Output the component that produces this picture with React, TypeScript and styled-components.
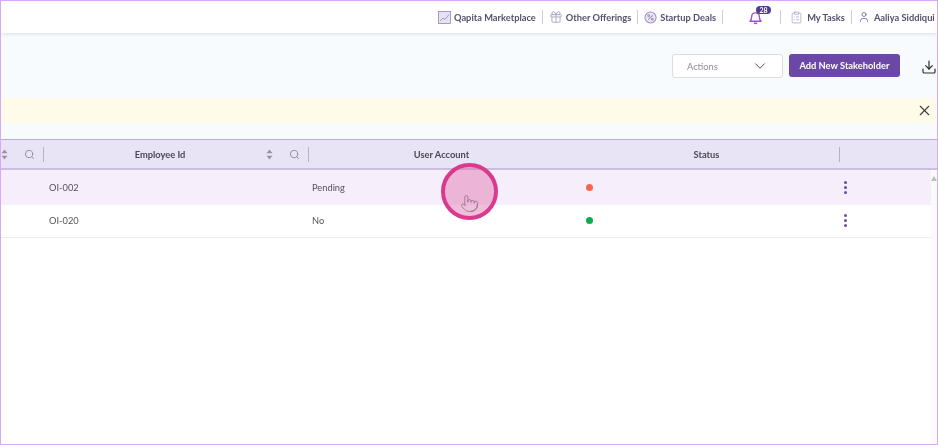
import React from 'react';
import styled, { createGlobalStyle, css } from 'styled-components';
import { ChevronDown, ClipboardList, Download, Gift, Pointer, Search, User, X } from 'lucide-react';

const GlobalStyle = createGlobalStyle`
  html, body {
    margin: 0;
    padding: 0;
    background: #fff;
  }
`;

function MarketIcon() {
  return (
    <svg width="13" height="13" viewBox="0 0 13 13" fill="none" stroke="#9c92b8" strokeWidth="0.9">
      <rect x="0.5" y="0.5" width="12" height="12" fill="#e6e2f1" />
      <path d="M2 10 5 7l2 1.500L11 3.500" />
    </svg>
  );
}

function PercentBadge() {
  return (
    <svg width="13" height="13" viewBox="0 0 14 14" fill="#ece6f6" stroke="currentColor" strokeWidth="1.1">
      <circle cx="7" cy="7" r="6" />
      <path d="M4.600 9.400 9.400 4.600" />
      <circle cx="5" cy="5" r="0.9" />
      <circle cx="9" cy="9" r="0.9" />
    </svg>
  );
}

const navItems = [
  { key: 'market', text: 'Qapita Marketplace', icon: <MarketIcon /> },
  { key: 'offers', text: 'Other Offerings', icon: <Gift size={14} strokeWidth={1.3} /> },
  { key: 'deals', text: 'Startup Deals', icon: <PercentBadge /> },
];

const rows = [
  { id: 'OI-002', account: 'Pending', dot: '#f4674b', active: true },
  { id: 'OI-020', account: 'No', dot: '#10a955', active: false },
];

const SortIcon = () => (
  <svg width="7" height="11" viewBox="0 0 7 11" fill="#99949f">
    <path d="M3.500 0.500 6.500 4.200H0.500Z" />
    <path d="M3.500 10.500 0.500 6.800H6.500Z" />
  </svg>
);

const BellIcon = () => (
  <svg width="13" height="15" viewBox="0 0 14 15" fill="none" stroke="#a24fd6" strokeWidth="1.500" strokeLinejoin="round">
    <path d="M1 11.500c1.200-1 1.800-2.200 1.800-4.500C2.800 4.300 4.600 2.500 7 2.500s4.200 1.800 4.200 4.500c0 2.300.6 3.500 1.800 4.500Z" />
    <path d="M5.500 13.200c.8 1 2.200 1 3 0" />
  </svg>
);

const HeaderCell = ({ label, tools, divider }: { label?: string; tools?: boolean; divider?: boolean }) => (
  <HeadCell $divider={divider}>
    <HeadLabel $shifted={tools && !!label}>{label}</HeadLabel>
    {tools && (
      <HeadTools>
        <SortIcon />
        <Search size={11} color="#8f8a96" strokeWidth={2} />
      </HeadTools>
    )}
  </HeadCell>
);

export default function App() {
  return (
    <Frame>
      <GlobalStyle />
      <TopBar>
        {navItems.map(({ key, text, icon }) => (
          <NavItem key={key}>
            <NavIcon>{icon}</NavIcon>
            {text}
          </NavItem>
        ))}
        <BellItem>
          <BellIcon />
          <Badge>28</Badge>
        </BellItem>
        <TasksItem>
          <NavIcon>
            <ClipboardList size={13} strokeWidth={1.2} />
          </NavIcon>
          My Tasks
        </TasksItem>
        <UserItem>
          <NavIcon>
            <User size={12} strokeWidth={1.6} color="#6b5aa8" />
          </NavIcon>
          Aaliya Siddiqui
        </UserItem>
      </TopBar>

      <Toolbar>
        <ActionSelect>
          <span>Actions</span>
          <ChevronDown size={18} strokeWidth={1.3} color="#4a4a4a" />
        </ActionSelect>
        <PrimaryButton>Add New Stakeholder</PrimaryButton>
        <DownloadButton>
          <Download size={16} strokeWidth={1.8} />
        </DownloadButton>
      </Toolbar>

      <Notice>
        <CloseButton>
          <X size={17} strokeWidth={1.5} />
        </CloseButton>
      </Notice>

      <Table>
        <HeadRow>
          <HeaderCell tools divider />
          <HeaderCell label="Employee Id" tools divider />
          <HeaderCell label="User Account" />
          <HeaderCell label="Status" divider />
          <HeaderCell />
        </HeadRow>
        {rows.map((row) => (
          <BodyRow key={row.id} $active={row.active}>
            <span />
            <IdCell>{row.id}</IdCell>
            <AccountCell>{row.account}</AccountCell>
            <StatusCell>
              <StatusDot $color={row.dot} />
            </StatusCell>
            <MenuCell>
              <Kebab>
                <i />
                <i />
                <i />
              </Kebab>
            </MenuCell>
          </BodyRow>
        ))}
        <ScrollTrack>
          <ScrollArrow />
        </ScrollTrack>
      </Table>

      <CursorRing>
        <Pointer size={19} strokeWidth={1} color="#8e6f88" />
      </CursorRing>
    </Frame>
  );
}

// the reference is a slightly soft video frame
const soft = css`
  filter: blur(0.35px);
`;

const Frame = styled.div`
  position: relative;
  box-sizing: border-box;
  width: 938px;
  height: 445px;
  border: 1px solid #d8a9fb;
  overflow: hidden;
  display: flex;
  flex-direction: column;
  background: #fff;
  font-family: Lato, 'Liberation Sans', sans-serif;
  color: #4c4855;
`;

const TopBar = styled.header`
  ${soft}
  flex: none;
  position: relative;
  z-index: 1;
  height: 32px;
  padding-left: 437px;
  display: flex;
  align-items: center;
  background: #fff;
  box-shadow: 0 1px 4px rgba(60, 60, 90, 0.16);
  white-space: nowrap;
`;

const NavItem = styled.div`
  display: flex;
  align-items: center;
  gap: 3px;
  height: 14px;
  padding-right: 6px;
  margin-right: 6px;
  border-right: 1px solid #cfcbe0;
  font-size: 9.300px;
  font-weight: 700;
  color: #55516a;
`;

const TasksItem = styled(NavItem)`
  gap: 4px;
`;

const UserItem = styled(NavItem)`
  gap: 4px;
  border-right: 0;
  margin-right: 0;
`;

const NavIcon = styled.span`
  display: flex;
  color: #9c92b8;
`;

const BellItem = styled.div`
  position: relative;
  display: flex;
  align-items: center;
  height: 14px;
  margin-left: 20px;
  padding-right: 18px;
  margin-right: 9px;
  border-right: 1px solid #cfcbe0;
`;

const Badge = styled.span`
  position: absolute;
  left: 7px;
  top: -4px;
  width: 15px;
  height: 8px;
  border-radius: 4px;
  background: #4f3c93;
  color: #fff;
  font-size: 7px;
  line-height: 8px;
  font-weight: 700;
  text-align: center;
`;

const Toolbar = styled.div`
  ${soft}
  flex: none;
  height: 65px;
  box-sizing: border-box;
  padding: 21px 0 0 671px;
  display: flex;
  align-items: flex-start;
  background: #f8fbfd;
`;

const ActionSelect = styled.div`
  box-sizing: border-box;
  width: 112px;
  height: 24px;
  padding: 0 13px 0 14px;
  display: flex;
  align-items: center;
  justify-content: space-between;
  background: #fff;
  border: 1px solid #dcdce2;
  border-radius: 3px;
  font-size: 9.300px;
  color: #8d8d94;
`;

const PrimaryButton = styled.button`
  box-sizing: border-box;
  width: 113px;
  height: 23px;
  margin-left: 6px;
  padding: 0;
  border: 0;
  border-radius: 3px;
  background: #6b47a8;
  color: #fff;
  font-family: inherit;
  font-size: 9.300px;
  font-weight: 700;
`;

const DownloadButton = styled.span`
  margin: 5px 0 0 21px;
  display: flex;
  color: #2c2c2c;
`;

const Notice = styled.div`
  ${soft}
  flex: none;
  height: 25px;
  margin-bottom: 16px;
  display: flex;
  align-items: center;
  justify-content: flex-end;
  padding-right: 4px;
  background: #fffbe9;
  box-shadow: 0 16px 0 #f8fbfd;
  color: #3a3a3a;
`;

const CloseButton = styled.span`
  display: flex;
`;

const Table = styled.section`
  ${soft}
  position: relative;
  flex: 1;
  font-size: 9.300px;
`;

const columns = css`
  display: grid;
  grid-template-columns: 43px 265px 265px 266px 1fr;
`;

const HeadRow = styled.div`
  ${columns}
  box-sizing: border-box;
  height: 31px;
  background: #e9e3f6;
  border-top: 1px solid #bcaed8;
  border-bottom: 2px solid #cabde3;
  font-weight: 700;
  color: #4c4855;
`;

const HeadCell = styled.div<{ $divider?: boolean }>`
  display: flex;
  align-items: center;
  height: 15px;
  align-self: center;
  box-sizing: border-box;
  border-right: ${({ $divider }) => ($divider ? '1px solid #b7b1c6' : '0')};
`;

const HeadLabel = styled.span<{ $shifted?: boolean }>`
  flex: 1;
  text-align: center;
  padding-left: ${({ $shifted }) => ($shifted ? 10 : 0)}px;
`;

const HeadTools = styled.span`
  display: flex;
  align-items: center;
  gap: 16px;
  padding-right: 8px;
`;

const BodyRow = styled.div<{ $active: boolean }>`
  ${columns}
  box-sizing: border-box;
  height: ${({ $active }) => ($active ? 35 : 33)}px;
  align-items: center;
  padding-right: 6px;
  padding-bottom: ${({ $active }) => ($active ? 0 : 1)}px;
  background: ${({ $active }) => ($active ? '#f6eefb' : '#fff')};
  border-bottom: ${({ $active }) => ($active ? '0' : '1px solid #eeeef0')};
  color: #55525c;
`;

const IdCell = styled.span`
  padding-left: 5px;
`;

const AccountCell = styled.span`
  padding-left: 3px;
`;

const StatusCell = styled.span`
  display: flex;
  padding-left: 12px;
`;

const StatusDot = styled.i<{ $color: string }>`
  width: 7px;
  height: 7px;
  border-radius: 50%;
  background: ${({ $color }) => $color};
`;

const MenuCell = styled.span`
  display: flex;
  padding-left: 4px;
`;

const Kebab = styled.span`
  display: flex;
  flex-direction: column;
  gap: 2px;

  i {
    width: 3px;
    height: 3px;
    border-radius: 50%;
    background: #6b4aa8;
  }
`;

const ScrollTrack = styled.div`
  position: absolute;
  top: 31px;
  right: 0;
  bottom: 0;
  width: 6px;
  background: #fafafa;
`;

const ScrollArrow = styled.div`
  margin: 6px auto 0;
  width: 0;
  height: 0;
  border-left: 3px solid transparent;
  border-right: 3px solid transparent;
  border-bottom: 5px solid #b5c4a8;
`;

const CursorRing = styled.div`
  position: absolute;
  left: 440px;
  top: 162px;
  box-sizing: border-box;
  width: 57px;
  height: 57px;
  border: 4px solid #d93a8e;
  border-radius: 50%;
  background: rgba(222, 100, 165, 0.42);
  display: flex;
  align-items: flex-end;
  justify-content: center;
  padding-bottom: 3px;
`;
